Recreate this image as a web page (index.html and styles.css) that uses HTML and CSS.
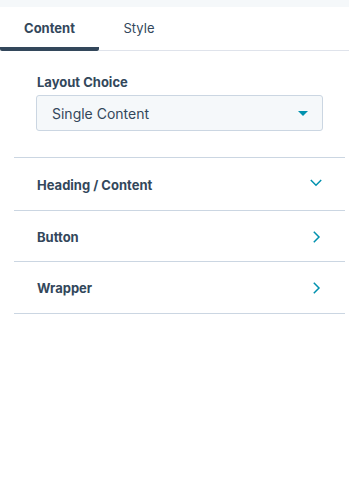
FILE: index.html
```html
<html>
<head>
	<title>Module Editor</title>
	<link rel="stylesheet" href="styles.css">
</head>
<body>
	<div class="topStrip"></div>
	<div class="tabs">
		<div class="tab active">Content</div>
		<div class="tab">Style</div>
		<div class="tabRest"></div>
	</div>
	<div class="field">
		<div class="fieldLabel">Layout Choice</div>
		<div class="select">
			<span>Single Content</span>
			<span class="caret"></span>
		</div>
	</div>
	<div class="groups">
		<div class="group open">
			<span>Heading / Content</span>
			<svg width="12" height="12" viewBox="0 0 12 12"><path d="M0.8 3 L6 8.2 L11.2 3" fill="none" stroke="#0091ae" stroke-width="1.5"/></svg>
		</div>
		<div class="group">
			<span>Button</span>
			<svg width="12" height="12" viewBox="0 0 12 12"><path d="M3.8 0.8 L9 6 L3.8 11.2" fill="none" stroke="#0091ae" stroke-width="1.5"/></svg>
		</div>
		<div class="group">
			<span>Wrapper</span>
			<svg width="12" height="12" viewBox="0 0 12 12"><path d="M3.8 0.8 L9 6 L3.8 11.2" fill="none" stroke="#0091ae" stroke-width="1.5"/></svg>
		</div>
	</div>
</body>
</html>
```
FILE: styles.css
```css
body {
	margin: 0;
	background-color: #ffffff;
	color: #33475b;
	font-family: 'Inter', 'Noto Sans', sans-serif;
	font-size: 13px;
}
.topStrip {
	height: 7px;
	background-color: #f5f8fa;
}
.tabs {
	display: flex;
	height: 44px;
}
.tab {
	display: flex;
	align-items: center;
	justify-content: center;
	padding-bottom: 2px;
	box-sizing: border-box;
	border-bottom: 1px solid #dfe3eb;
}
.tab:first-child {
	width: 99px;
}
.tab:nth-child(2) {
	width: 80px;
}
.tab.active {
	font-weight: 700;
	border-bottom: 4px solid #33475b;
	border-radius: 0 0 2px 2px;
	padding-top: 3px;
}
.tabRest {
	flex: 1;
	border-bottom: 1px solid #dfe3eb;
}
.field {
	padding: 23px 26px 26px 36px;
}
.fieldLabel {
	font-weight: 700;
	padding-left: 1px;
	margin-bottom: 5px;
}
.select {
	display: flex;
	align-items: center;
	justify-content: space-between;
	height: 36px;
	box-sizing: border-box;
	padding: 0 14px 0 15px;
	background-color: #f5f8fa;
	border: 1px solid #cbd6e2;
	border-radius: 3px;
	font-size: 14px;
}
.caret {
	width: 0;
	height: 0;
	border-left: 5px solid transparent;
	border-right: 5px solid transparent;
	border-top: 5px solid #0091ae;
}
.groups {
	margin: 0 4px 0 14px;
	border-top: 1px solid #cbd6e2;
}
.group {
	display: flex;
	align-items: center;
	justify-content: space-between;
	height: 49px;
	padding: 1px 23px 0 23px;
	border-bottom: 1px solid #cbd6e2;
	font-weight: 700;
}
.group.open {
	height: 50px;
	padding-top: 2px;
}
.group:last-child {
	height: 50px;
}
.group.open svg {
	margin-bottom: 4px;
}
```
